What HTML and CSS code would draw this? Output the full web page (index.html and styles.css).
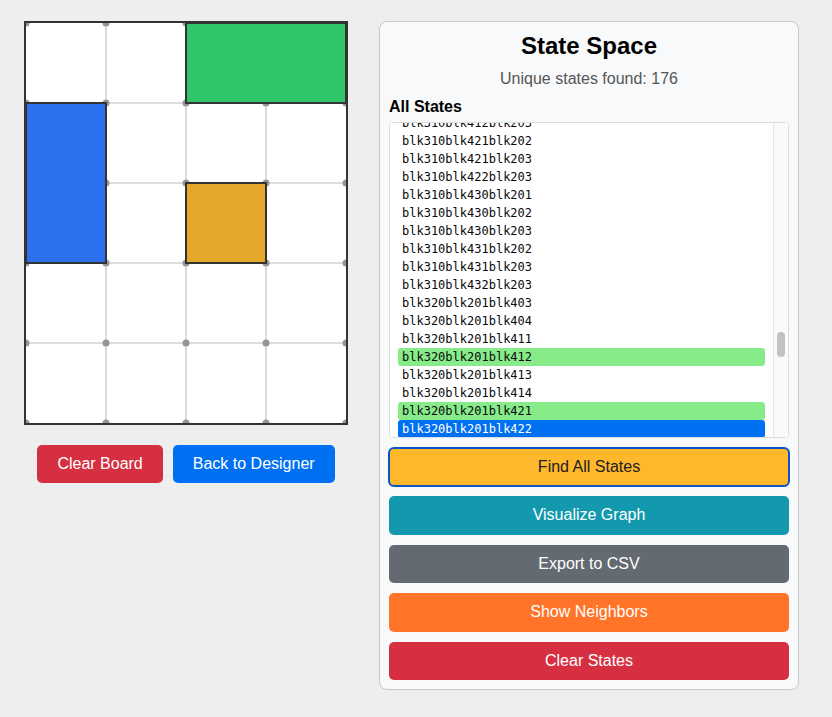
FILE: index.html
```html
<!DOCTYPE html>
<html lang="en">
<head>
<meta charset="utf-8">
<title>State Space</title>
<link rel="stylesheet" href="styles.css">
</head>
<body>
<div class="app">
  <div class="board-col">
    <div class="board">
      <svg class="board-svg" width="320" height="400" viewBox="0 0 320 400">
        <g class="grid-lines">
          <line x1="80" y1="0" x2="80" y2="400"/>
          <line x1="160" y1="0" x2="160" y2="400"/>
          <line x1="240" y1="0" x2="240" y2="400"/>
          <line x1="0" y1="80" x2="320" y2="80"/>
          <line x1="0" y1="160" x2="320" y2="160"/>
          <line x1="0" y1="240" x2="320" y2="240"/>
          <line x1="0" y1="320" x2="320" y2="320"/>
        </g>
        <g class="grid-dots">
          <circle cx="0" cy="0" r="3.5"/><circle cx="80" cy="0" r="3.5"/><circle cx="160" cy="0" r="3.5"/><circle cx="240" cy="0" r="3.5"/><circle cx="320" cy="0" r="3.5"/>
          <circle cx="0" cy="80" r="3.5"/><circle cx="80" cy="80" r="3.5"/><circle cx="160" cy="80" r="3.5"/><circle cx="240" cy="80" r="3.5"/><circle cx="320" cy="80" r="3.5"/>
          <circle cx="0" cy="160" r="3.5"/><circle cx="80" cy="160" r="3.5"/><circle cx="160" cy="160" r="3.5"/><circle cx="240" cy="160" r="3.5"/><circle cx="320" cy="160" r="3.5"/>
          <circle cx="0" cy="240" r="3.5"/><circle cx="80" cy="240" r="3.5"/><circle cx="160" cy="240" r="3.5"/><circle cx="240" cy="240" r="3.5"/><circle cx="320" cy="240" r="3.5"/>
          <circle cx="0" cy="320" r="3.5"/><circle cx="80" cy="320" r="3.5"/><circle cx="160" cy="320" r="3.5"/><circle cx="240" cy="320" r="3.5"/><circle cx="320" cy="320" r="3.5"/>
          <circle cx="0" cy="400" r="3.5"/><circle cx="80" cy="400" r="3.5"/><circle cx="160" cy="400" r="3.5"/><circle cx="240" cy="400" r="3.5"/><circle cx="320" cy="400" r="3.5"/>
        </g>
        <rect class="block block-green" x="160" y="0" width="160" height="80"/>
        <rect class="block block-blue" x="0" y="80" width="80" height="160"/>
        <rect class="block block-orange" x="160" y="160" width="80" height="80"/>
      </svg>
    </div>
    <div class="board-actions">
      <button class="btn btn-danger">Clear Board</button>
      <button class="btn btn-primary">Back to Designer</button>
    </div>
  </div>

  <div class="panel">
    <h2 class="panel-title">State Space</h2>
    <p class="panel-count">Unique states found: 176</p>
    <h3 class="panel-subtitle">All States</h3>
    <div class="list-wrap">
      <div class="state-list" id="state-list">
        <div class="state-item">blk310blk412blk203</div>
        <div class="state-item">blk310blk421blk202</div>
        <div class="state-item">blk310blk421blk203</div>
        <div class="state-item">blk310blk422blk203</div>
        <div class="state-item">blk310blk430blk201</div>
        <div class="state-item">blk310blk430blk202</div>
        <div class="state-item">blk310blk430blk203</div>
        <div class="state-item">blk310blk431blk202</div>
        <div class="state-item">blk310blk431blk203</div>
        <div class="state-item">blk310blk432blk203</div>
        <div class="state-item">blk320blk201blk403</div>
        <div class="state-item">blk320blk201blk404</div>
        <div class="state-item">blk320blk201blk411</div>
        <div class="state-item state-neighbor">blk320blk201blk412</div>
        <div class="state-item">blk320blk201blk413</div>
        <div class="state-item">blk320blk201blk414</div>
        <div class="state-item state-neighbor">blk320blk201blk421</div>
        <div class="state-item state-selected">blk320blk201blk422</div>
      </div>
      <div class="scrollbar"><div class="scrollbar-thumb"></div></div>
    </div>
    <div class="panel-actions">
      <button class="btn btn-block btn-warning btn-focused">Find All States</button>
      <button class="btn btn-block btn-info">Visualize Graph</button>
      <button class="btn btn-block btn-secondary">Export to CSV</button>
      <button class="btn btn-block btn-orange">Show Neighbors</button>
      <button class="btn btn-block btn-danger">Clear States</button>
    </div>
  </div>
</div>
<script src="script.js"></script>
</body>
</html>
```

FILE: styles.css
```css
* {
  box-sizing: border-box;
}

body {
  margin: 0;
  padding: 21px 24px;
  background: #eeeeee;
  font-family: "Liberation Sans", Arial, Helvetica, sans-serif;
  color: #000;
}

.app {
  display: flex;
  align-items: flex-start;
  gap: 31px;
}

.board-col {
  width: 324px;
  display: flex;
  flex-direction: column;
  align-items: center;
}

.board {
  width: 324px;
  height: 404px;
  border: 2px solid #333333;
  background: #ffffff;
  line-height: 0;
}

.board-svg {
  display: block;
}

.grid-lines line {
  stroke: #dddddd;
  stroke-width: 2;
}

.grid-dots circle {
  fill: #969696;
}

.block {
  stroke: #333333;
  stroke-width: 2;
}

.block-green { fill: #31c56a; }
.block-blue { fill: #2c70f0; }
.block-orange { fill: #e3a82a; }

.board-actions {
  margin-top: 20px;
  display: flex;
  gap: 10px;
}

.btn {
  font-family: "Liberation Sans", Arial, Helvetica, sans-serif;
  font-size: 16px;
  line-height: 18.4px;
  padding: 10px 20px;
  border: 0;
  border-radius: 5px;
  color: #ffffff;
  cursor: pointer;
}

.btn-danger { background: #d72f42; }
.btn-primary { background: #0070f3; }
.btn-warning { background: #ffb72c; color: #212121; }
.btn-info { background: #1399ae; }
.btn-secondary { background: #636a71; }
.btn-orange { background: #ff7429; }

.btn-block {
  width: 100%;
  padding: 10px;
}

.btn-focused {
  outline: 2px solid #0a56c8;
  outline-offset: -1px;
}

.panel {
  width: 420px;
  padding: 10px 9px 9px;
  background: #f8f9fa;
  border: 1px solid #c9c9c9;
  border-radius: 8px;
}

.panel-title {
  margin: 0;
  font-size: 24px;
  font-weight: bold;
  text-align: center;
  color: #000;
}

.panel-count {
  margin: 10px 0 0;
  font-size: 16px;
  text-align: center;
  color: #555555;
}

.panel-subtitle {
  margin: 10px 0 6px;
  font-size: 16px;
  font-weight: bold;
}

.list-wrap {
  position: relative;
}

.state-list {
  position: relative;
  height: 316px;
  overflow-y: scroll;
  background: #ffffff;
  border: 1px solid #dddddd;
  border-radius: 4px;
  padding: 8px 23px 8px 8px;
  scrollbar-width: none;
}

.state-list::-webkit-scrollbar {
  display: none;
}

.scrollbar {
  position: absolute;
  top: 1px;
  right: 1px;
  bottom: 1px;
  width: 15px;
  background: #fafafa;
  border-left: 1px solid #e8e8e8;
  border-radius: 0 3px 3px 0;
}

.scrollbar-thumb {
  position: absolute;
  top: 209px;
  left: 3px;
  width: 8px;
  height: 25px;
  border-radius: 4px;
  background: #c2c2c2;
}

.state-item {
  font-family: "DejaVu Sans Mono", Menlo, monospace;
  font-size: 12px;
  line-height: 18px;
  height: 18px;
  padding: 0 4px;
  color: #0a0a0a;
  border-radius: 3px;
  white-space: nowrap;
}

.state-neighbor {
  background: #88eb8a;
}

.state-selected {
  background: #0070f3;
  color: #ffffff;
}

.panel-actions {
  margin-top: 10px;
  display: flex;
  flex-direction: column;
  gap: 10px;
}
```

FILE: script.js
```js
(function () {
  var list = document.getElementById('state-list');
  var first = list.firstElementChild;
  var firstVisible = first.textContent;
  var lastVisible = list.lastElementChild.textContent;

  function combos(as, bs, cs) {
    var out = [];
    as.forEach(function (a) {
      bs.forEach(function (b) {
        cs.forEach(function (c) { out.push(a + b + c); });
      });
    });
    return out.sort();
  }

  var before = combos(
    ['blk300', 'blk301', 'blk302', 'blk303', 'blk310'],
    ['blk401', 'blk402', 'blk403', 'blk410', 'blk411', 'blk412', 'blk413', 'blk420', 'blk421', 'blk422', 'blk430', 'blk431', 'blk432'],
    ['blk201', 'blk202', 'blk203']
  ).filter(function (s) { return s < firstVisible; }).slice(-117);

  var after = combos(
    ['blk320', 'blk321'],
    ['blk201', 'blk202', 'blk203'],
    ['blk401', 'blk402', 'blk403', 'blk404', 'blk411', 'blk412', 'blk413', 'blk414', 'blk421', 'blk422', 'blk423', 'blk424', 'blk431', 'blk432', 'blk433', 'blk434']
  ).filter(function (s) { return s > lastVisible; }).slice(0, 41);

  function make(s) {
    var d = document.createElement('div');
    d.className = 'state-item';
    d.textContent = s;
    return d;
  }

  var fragBefore = document.createDocumentFragment();
  before.forEach(function (s) { fragBefore.appendChild(make(s)); });
  list.insertBefore(fragBefore, first);

  var fragAfter = document.createDocumentFragment();
  after.forEach(function (s) { fragAfter.appendChild(make(s)); });
  list.appendChild(fragAfter);

  list.scrollTop = first.offsetTop + 9;
})();
```
